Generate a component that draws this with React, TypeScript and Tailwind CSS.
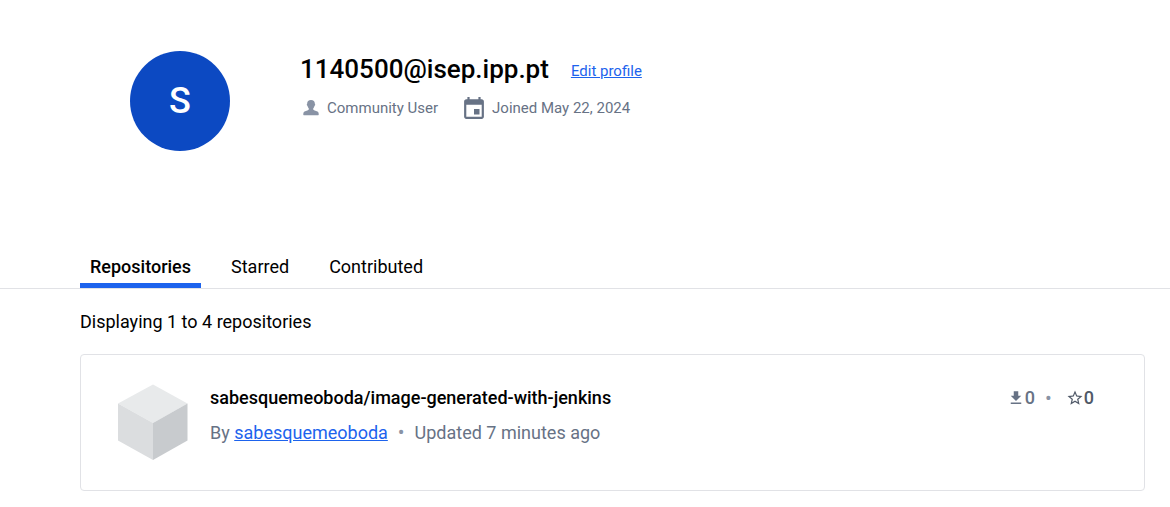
import React from 'react';

function Cube() {
  return (
    <svg width="71" height="76" viewBox="0 0 71 76" aria-hidden="true">
      <path d="M36 0.500 70.500 19.500 36 39 1 19.500Z" fill="#e8eaeb" />
      <path d="M1 19.500 36 39V76L1 56.500Z" fill="#dbdddf" />
      <path d="M70.500 19.500 36 39V76L70.500 56.500Z" fill="#c8cbce" />
    </svg>
  );
}

export default function App() {
  return (
    <main className="bg-white pb-4 font-['Roboto',sans-serif] text-black">
      <header className="flex gap-[70px] pt-[51px] pl-[130px]">
        <div className="flex size-[100px] items-center justify-center rounded-full bg-[#0c49c2] text-4xl font-medium text-white">S</div>
        <div>
          <div className="flex items-center gap-[22px]">
            <h1 className="text-[26px] leading-9 font-medium">1140500@isep.ipp.pt</h1>
            <a href="#profile" className="pt-[3px] text-[15px] leading-6 text-[#1d63ed] underline">Edit profile</a>
          </div>
          <div className="mt-[9px] flex items-center gap-[25px] text-[15px] leading-6 text-[#677285]">
            <span className="flex items-center gap-[5px]">
              <svg className="size-[22px]" viewBox="0 0 22 22" fill="#8993a5" aria-hidden="true"><path d="M11 3C8.500 3 7.200 4.500 7.200 6.500c0 .5-.5.7-.4 1.300.1.800.7.900.9 1.700.3 1 .8 1.500 1.100 1.900v1.100c-.7 1.100-3.600 1.300-4.700 2.300-.6.600-.8 1.300-.8 2.300v.6c0 .3.200.5.500.5h14.400c.3 0 .5-.2.500-.5v-.6c0-1-.2-1.700-.8-2.300-1.100-1-4-1.200-4.700-2.300v-1.100c.3-.4.800-.9 1.100-1.900.2-.8.800-.9.900-1.700.1-.6-.4-.8-.4-1.300C14.800 4.500 13.500 3 11 3Z" /></svg>
              Community User
            </span>
            <span className="flex items-center gap-[7px]">
              <svg className="h-[22px] w-[22px]" viewBox="2 1 20 20" preserveAspectRatio="none" fill="#677285" aria-hidden="true"><path d="M17 12h-5v5h5v-5zM16 1v2H8V1H6v2H5c-1.110 0-1.990.9-1.990 2L3 19c0 1.100.89 2 2 2h14c1.100 0 2-.9 2-2V5c0-1.100-.9-2-2-2h-1V1h-2zm3 18H5V8h14v11z" /></svg>
              Joined May 22, 2024
            </span>
          </div>
        </div>
      </header>
      <nav className="mt-[95px] flex gap-5 border-b border-[#e1e2e6] pl-20 text-lg leading-7">
        <button className="border-b-[5px] border-[#1d63ed] px-[10px] pt-[7px] pb-[2px] font-medium">Repositories</button>
        <button className="border-b-[5px] border-transparent px-[10px] pt-[7px] pb-[2px]">Starred</button>
        <button className="border-b-[5px] border-transparent px-[10px] pt-[7px] pb-[2px]">Contributed</button>
      </nav>
      <section className="pr-[25px] pl-20">
        <p className="mt-[19px] text-lg leading-7">Displaying 1 to 4 repositories</p>
        <article className="mt-[18px] flex rounded border border-[#e1e2e6] pt-[29px] pr-[50px] pb-[30px] pl-9">
          <Cube />
          <div className="ml-[22px] flex-1">
            <h2 className="text-lg leading-7 font-medium">sabesquemeoboda/image-generated-with-jenkins</h2>
            <p className="mt-[6px] text-lg leading-7 text-[#677285]">By <a href="#owner" className="text-[#1d63ed] underline">sabesquemeoboda</a><span className="mx-[10px] text-xl leading-7 text-[#8993a5]">•</span>Updated 7 minutes ago</p>
          </div>
          <div className="flex h-7 items-center text-lg font-medium text-[#677285]">
            <svg className="size-[18px]" viewBox="0 0 24 24" fill="currentColor" aria-hidden="true"><path d="M19 9h-4V3H9v6H5l7 7 7-7zM5 18v2h14v-2H5z" /></svg>0
            <span className="mx-[10px] text-xl leading-7 font-normal text-[#8993a5]">•</span>
            <span className="ml-1 flex items-center text-[#505968]">
              <svg className="size-[18px]" viewBox="0 0 24 24" fill="currentColor" aria-hidden="true"><path d="m22 9.240-7.190-.62L12 2 9.190 8.630 2 9.240l5.460 4.730L5.820 21 12 17.270 18.180 21l-1.630-7.030L22 9.240zM12 15.400l-3.760 2.270 1-4.280-3.320-2.880 4.380-.38L12 6.100l1.710 4.040 4.380.38-3.320 2.880 1 4.280L12 15.400z" /></svg>0
            </span>
          </div>
        </article>
      </section>
    </main>
  );
}
